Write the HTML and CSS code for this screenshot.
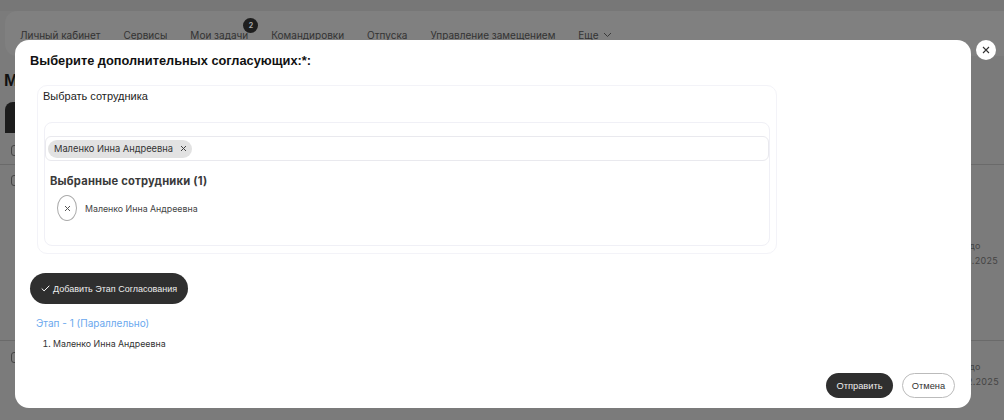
FILE: index.html
```html
<!DOCTYPE html>
<html lang="ru">
<head>
<meta charset="utf-8">
<title>Согласование</title>
<link rel="stylesheet" href="styles.css">
</head>
<body>
<div class="page">
  <div class="topstrip"></div>
  <nav class="nav">
    <a>Личный кабинет</a>
    <a>Сервисы</a>
    <a class="has-badge">Мои задачи<span class="badge">2</span></a>
    <a>Командировки</a>
    <a>Отпуска</a>
    <a>Управление замещением</a>
    <a class="more">Еще
      <svg width="9" height="6" viewBox="0 0 9 6"><path d="M1 1l3.5 3.5L8 1" fill="none" stroke="#3a3a3a" stroke-width="1"/></svg>
    </a>
  </nav>
  <h1 class="page-title">Мои задачи</h1>
  <div class="tab"></div>
  <div class="row row-head"><span class="check"></span></div>
  <div class="row row-one"><span class="check"></span><span class="date">до<br>21.11.2025</span></div>
  <div class="row row-two"><span class="check"></span><span class="date">до<br>12.12.2025</span></div>
</div>
<div class="overlay">
  <div class="modal">
    <h2 class="modal-title">Выберите дополнительных согласующих:*:</h2>
    <section class="panel">
      <div class="panel-label">Выбрать сотрудника</div>
      <div class="inner">
        <div class="field">
          <span class="chip">Маленко Инна Андреевна
            <svg class="chip-x" width="7" height="7" viewBox="0 0 7 7"><path d="M1 1l5 5M6 1L1 6" stroke="#444" stroke-width="1"/></svg>
          </span>
        </div>
        <h3 class="selected-title">Выбранные сотрудники (1)</h3>
        <div class="person">
          <span class="remove">
            <svg width="7" height="7" viewBox="0 0 7 7"><path d="M1 1l5 5M6 1L1 6" stroke="#555" stroke-width="1"/></svg>
          </span>
          <span class="person-name">Маленко Инна Андреевна</span>
        </div>
      </div>
    </section>
    <button class="add-stage">
      <svg width="9" height="7" viewBox="0 0 9 7"><path d="M.7 3.5l2.4 2.4L8.3.8" fill="none" stroke="#fff" stroke-width="1"/></svg>
      Добавить Этап Согласования
    </button>
    <div class="stage-title">Этап - 1 (Параллельно)</div>
    <ol class="stage-list"><li>Маленко Инна Андреевна</li></ol>
    <div class="actions">
      <button class="btn btn-dark">Отправить</button>
      <button class="btn btn-light">Отмена</button>
    </div>
  </div>
  <button class="close">
    <svg width="8" height="8" viewBox="0 0 8 8"><path d="M1 1l6 6M7 1L1 7" stroke="#333" stroke-width="1.1"/></svg>
  </button>
</div>
</body>
</html>
```
FILE: styles.css
```css
* { box-sizing: border-box; }
html, body { margin: 0; height: 100%; overflow: hidden; }
body { font-family: Inter, "Liberation Sans", sans-serif; background: #7b7b7b; color: #222; }
.page { height: 420px; background: #7b7b7b; overflow: hidden; }
.topstrip { height: 11px; background: #777; }
.nav { margin-left: 5px; height: 45px; background: #808080; border-radius: 12px 0 0 12px; padding: 17px 0 0 15px; display: flex; gap: 23px; font-size: 10px; color: #333; }
.nav a { white-space: nowrap; line-height: 14px; }
.has-badge { position: relative; }
.badge { position: absolute; left: 53px; top: -10px; width: 15px; height: 15px; border-radius: 50%; background: #1e1e1e; color: #aaa; font-size: 7px; font-weight: 700; display: flex; align-items: center; justify-content: center; }
.more svg { margin-left: 2px; vertical-align: 1px; }
.page-title { margin: 15px 0 0 4px; font-size: 17px; line-height: 20px; color: #111; font-family: "Liberation Sans", sans-serif; }
.tab { margin: 11px 0 0 5px; width: 120px; height: 31px; background: #1c1c1c; border-radius: 8px 8px 0 0; }
.row { position: relative; border-bottom: 1px solid #6a6a6a; padding-left: 11px; }
.row-head { height: 32px; padding-top: 12px; }
.row-one { height: 176px; padding-top: 10px; }
.row-two { height: 60px; padding-top: 11px; border-bottom: 0; }
.check { display: block; width: 11px; height: 11px; border: 1px solid #444; border-radius: 3px; }
.date { position: absolute; right: 5px; width: 48px; font-size: 9px; letter-spacing: 0.3px; line-height: 15px; color: #444; white-space: nowrap; text-align: center; }
.row-one .date { top: 73px; }
.row-two .date { top: 18px; }
.overlay { position: absolute; inset: 0; }
.modal { position: absolute; left: 15px; top: 40px; width: 956px; height: 368px; background: #fff; border-radius: 14px; padding: 13px 15px 0; }
.modal-title { margin: 0; font-family: "Liberation Sans", sans-serif; font-size: 12.8px; line-height: 16px; font-weight: 700; color: #111; }
.panel { margin-top: 16px; margin-left: 7px; width: 740px; height: 169px; border: 1px solid #f3f3f8; border-radius: 10px; padding: 3px 6px 7px; }
.panel-label { margin-left: -1px; font-family: "Liberation Sans", sans-serif; font-size: 11px; line-height: 14px; color: #222; }
.inner { margin-top: 19px; height: 124px; border: 1px solid #f0f0f6; border-radius: 8px; padding-top: 13px; }
.field { height: 25px; border: 1px solid #e9e9ee; border-radius: 6px; display: flex; align-items: center; padding-left: 2px; }
.chip { display: inline-flex; align-items: center; gap: 7px; height: 18px; padding: 0 5px 0 6px; background: #e2e2e2; border-radius: 9px; font-size: 9.3px; color: #333; }
.selected-title { margin: 13px 0 0 5px; font-size: 11.2px; line-height: 14px; font-weight: 700; color: #3a3a3a; letter-spacing: 0.2px; }
.person { display: flex; align-items: center; gap: 8px; margin: 7px 0 0 12px; }
.remove { width: 20px; height: 26px; border: 1px solid #aaa; border-radius: 50%; display: flex; align-items: center; justify-content: center; }
.person-name { font-size: 8.8px; color: #444; }
.add-stage { display: flex; align-items: center; gap: 3px; margin-top: 19px; width: 158px; height: 31px; padding: 0 0 0 11px; border: 0; border-radius: 16px; background: #2f2f2f; color: #eee; font-family: "Liberation Sans", sans-serif; font-size: 9px; white-space: nowrap; }
.stage-title { margin: 13px 0 0 6px; font-size: 10px; line-height: 12px; color: #6aa8ee; }
.stage-list { margin: 9px 0 0; padding: 0 0 0 23px; font-size: 8.8px; line-height: 11px; color: #333; }
.actions { position: absolute; right: 16px; bottom: 10px; display: flex; gap: 9px; }
.btn { height: 25px; border-radius: 13px; font-family: "Liberation Sans", sans-serif; font-size: 9.3px; padding: 0; }
.btn-dark { width: 67px; background: #2f2f2f; color: #eee; border: 0; }
.btn-light { width: 53px; background: #fff; color: #333; border: 1px solid #bbb; }
.close { position: absolute; left: 976px; top: 40px; width: 20px; height: 20px; border-radius: 50%; background: #fff; border: 0; padding: 0; display: flex; align-items: center; justify-content: center; }
```
